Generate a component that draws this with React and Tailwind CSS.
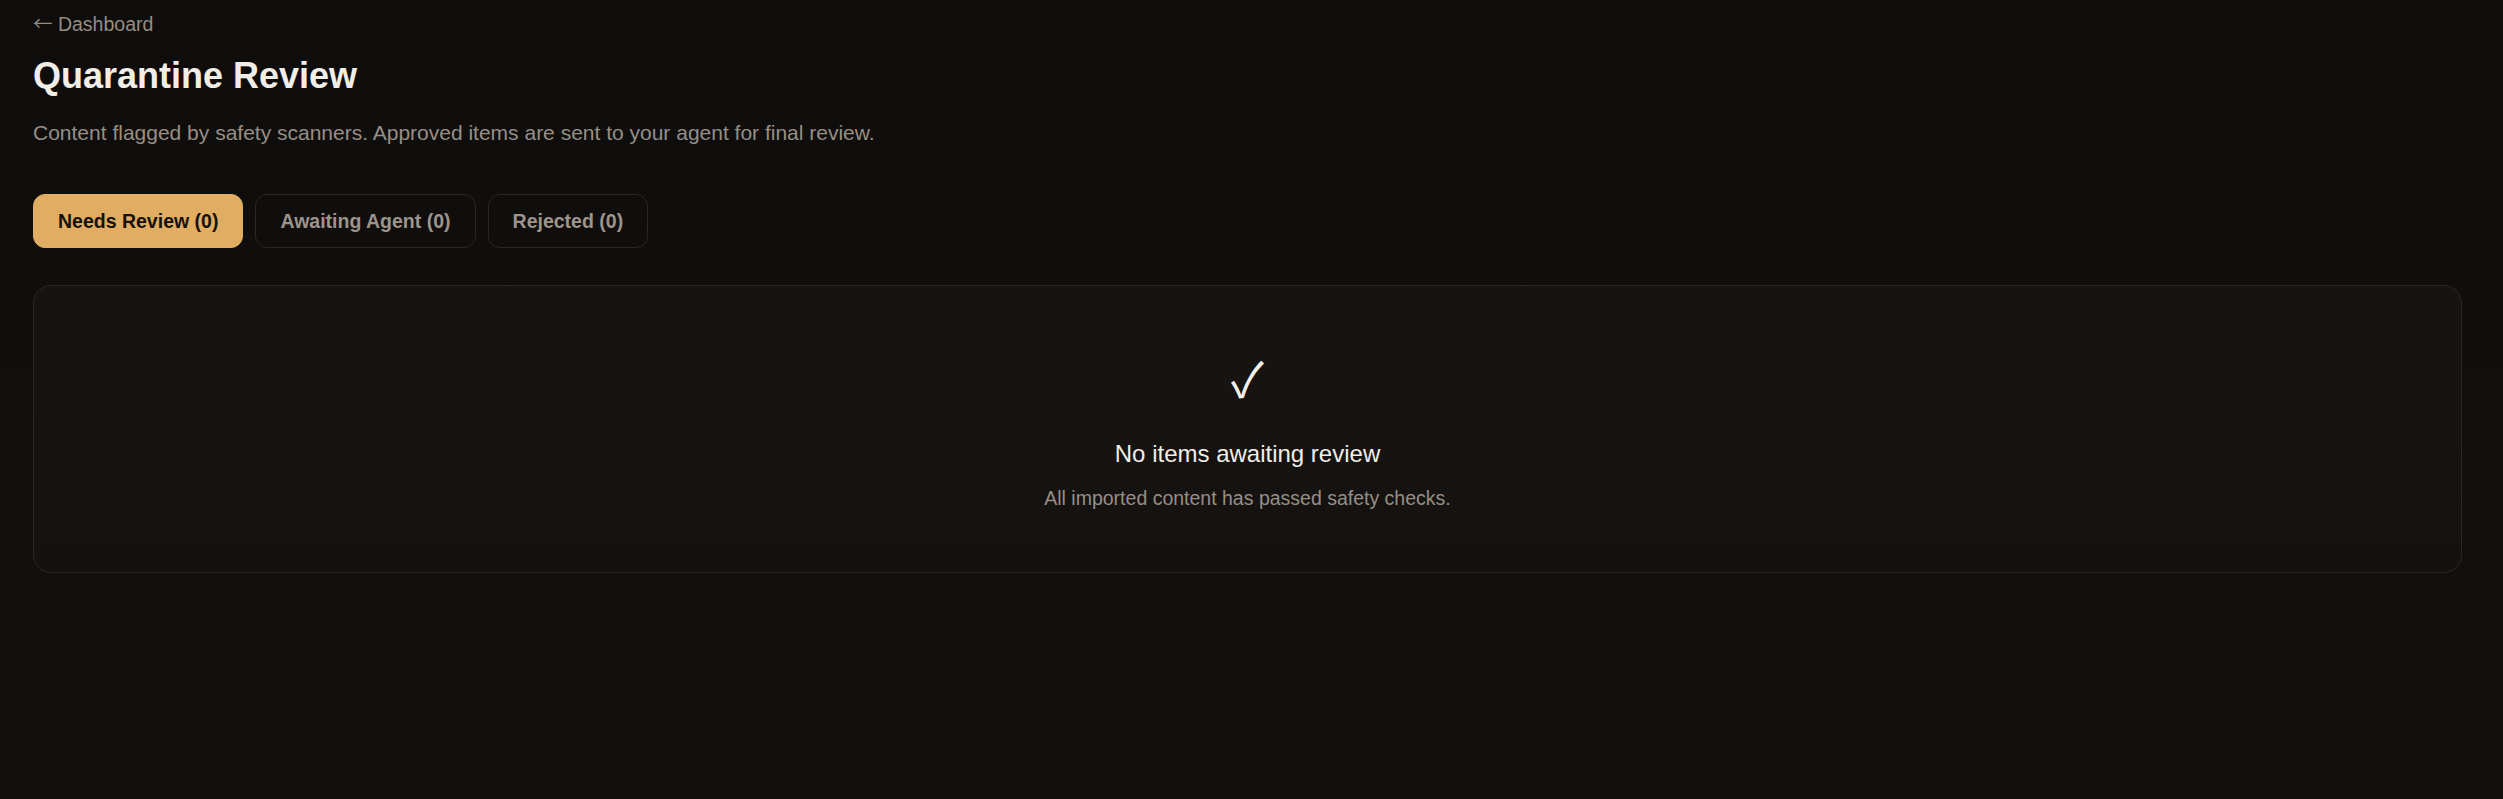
const TABS = [
  { key: 'review', label: 'Needs Review', count: 0 },
  { key: 'agent', label: 'Awaiting Agent', count: 0 },
  { key: 'rejected', label: 'Rejected', count: 0 },
]

export default function App() {
  const active = 'review'

  return (
    <div className="min-h-screen bg-[linear-gradient(180deg,#0e0d0c_0%,#100f0d_60%,#11100e_100%)] pl-[33px] pr-[41px] pt-[9px] pb-10 font-['Liberation_Sans','Noto_Sans_CJK_JP',sans-serif]">
      {/* Back link */}
      <a href="#" className="block h-[30px] w-fit text-[19.5px] leading-[30px] text-[#968c82]">
        <span className="font-['Noto_Sans_CJK_JP',sans-serif] leading-none">←</span>
        {' '}Dashboard
      </a>

      {/* Header */}
      <h1 className="mt-[15px] text-[36px] leading-[44px] font-bold text-[#f1ede7]">
        Quarantine Review
      </h1>
      <p className="mt-[20px] text-[21px] leading-[30px] text-[#978e85]">
        Content flagged by safety scanners. Approved items are sent to your agent for final review.
      </p>

      {/* Tabs */}
      <div className="mt-[46px] flex gap-[12px]">
        {TABS.map((t) =>
          t.key === active ? (
            <button
              key={t.key}
              className="rounded-[12px] border border-[#e0ad62] bg-[#e0ad62] px-[24px] py-[11px] text-[19.5px] leading-[30px] font-bold text-[#15110c]"
            >
              {t.label} ({t.count})
            </button>
          ) : (
            <button
              key={t.key}
              className="rounded-[12px] border border-[#2a2623] bg-transparent px-[24px] py-[11px] text-[19.5px] leading-[30px] font-bold text-[#9d948b]"
            >
              {t.label} ({t.count})
            </button>
          )
        )}
      </div>

      {/* Empty state */}
      <div className="mt-[37px] flex flex-col items-center rounded-[18px] border border-[#2a2724] bg-[linear-gradient(180deg,#171410_0%,#141210_100%)] pt-[71px] pb-[60px]">
        <div className="h-[48px] text-[48px] leading-none text-[#f3efe9]">✓</div>
        <h2 className="mt-[33px] text-[24px] leading-[32px] text-[#f1ede7]">No items awaiting review</h2>
        <p className="mt-[14px] text-[19.5px] leading-[28px] text-[#978e85]">
          All imported content has passed safety checks.
        </p>
      </div>
    </div>
  )
}
